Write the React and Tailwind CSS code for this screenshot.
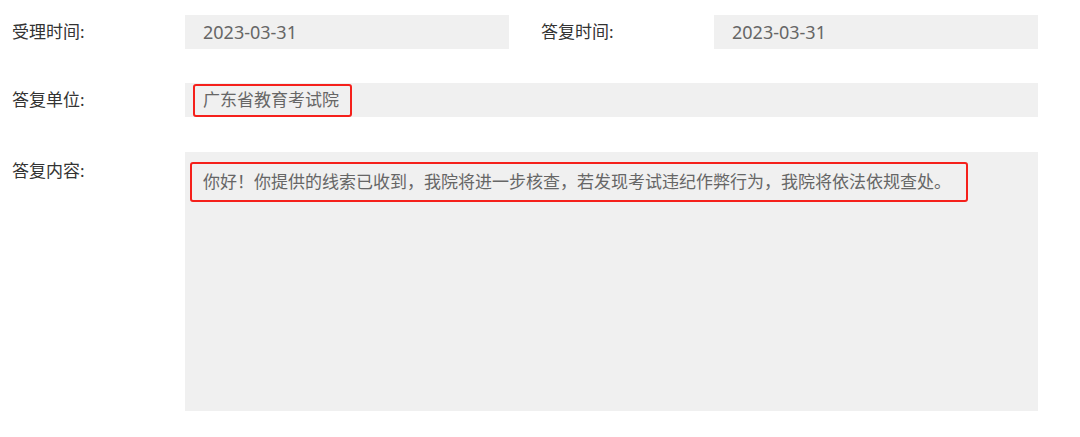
export default function App() {
  const font = { fontFamily: '"Noto Sans", "Noto Sans CJK SC", sans-serif' }
  return (
    <div className="w-[1080px] h-[437px] bg-white pl-3 pt-[15px]" style={font}>
      {/* 时间 */}
      <div className="flex">
        <div className="flex w-[529px] items-center">
          <div className="w-[173px] text-[17px] text-[#333]">受理时间:</div>
          <div className="w-[324px] h-[34px] bg-[#f0f0f0] flex items-center pl-[18px] text-[18px] text-[#666]">2023-03-31</div>
        </div>
        <div className="flex w-[529px] items-center">
          <div className="w-[173px] text-[17px] text-[#333]">答复时间:</div>
          <div className="w-[324px] h-[34px] bg-[#f0f0f0] flex items-center pl-[18px] text-[18px] text-[#666]">2023-03-31</div>
        </div>
      </div>

      {/* 单位 */}
      <div className="flex items-center mt-[34px]">
        <div className="w-[173px] text-[17px] text-[#333]">答复单位:</div>
        <div className="w-[853px] h-[34px] bg-[#f0f0f0] flex items-center pl-2">
          <span className="h-[33px] flex items-center pl-2 pr-[11px] border-2 border-[#f5201b] rounded-[3px] text-[17px] text-[#666]">广东省教育考试院</span>
        </div>
      </div>

      {/* 内容 */}
      <div className="flex mt-[35px]">
        <div className="w-[173px] text-[17px] text-[#333] pt-[6px]">答复内容:</div>
        <div className="w-[853px] h-[259px] bg-[#f0f0f0] pt-[10px] pl-[5px]">
          <div className="inline-flex h-[40px] items-center pl-[11px] pr-[15px] border-2 border-[#f5201b] rounded-[3px] text-[17px] text-[#666]">
            你好！你提供的线索已收到，我院将进一步核查，若发现考试违纪作弊行为，我院将依法依规查处。
          </div>
        </div>
      </div>
    </div>
  )
}
